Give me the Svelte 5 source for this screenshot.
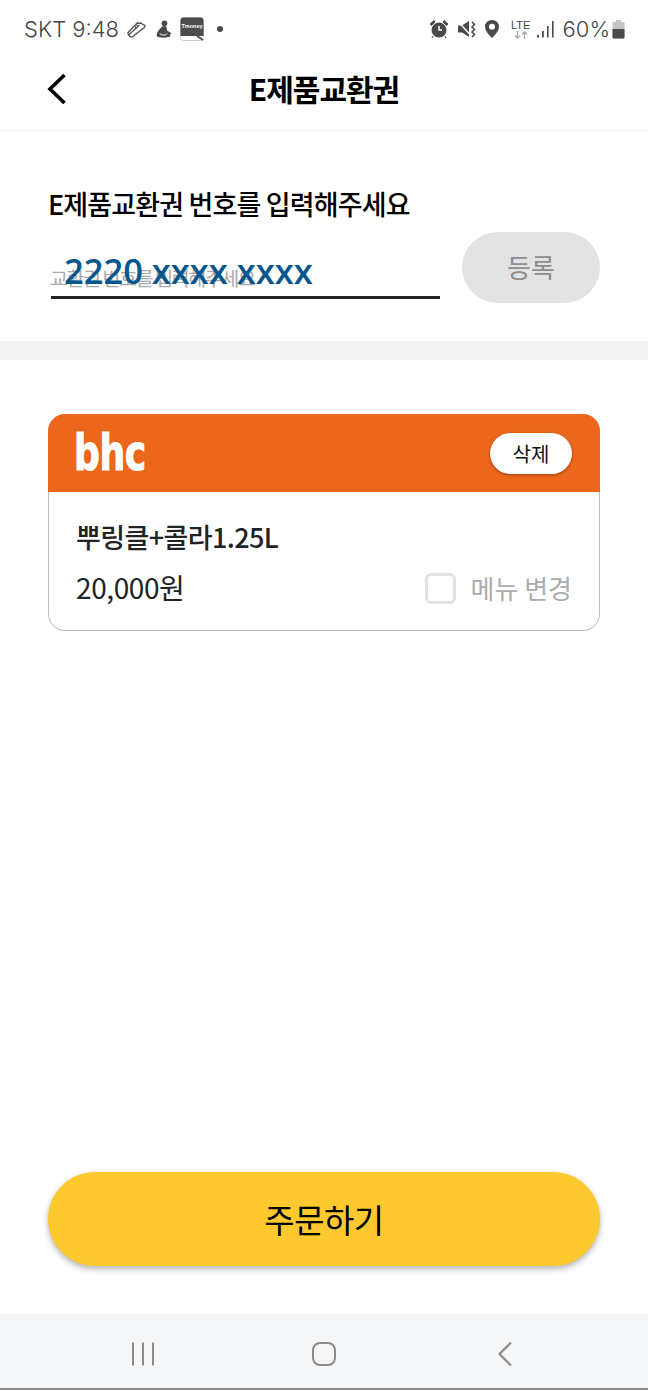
<script>
	const title = 'E제품교환권';
</script>

<div class="screen">
	<div class="status">
		<div class="status-left">
			<span class="status-text">SKT 9:48</span>
			<svg class="ic" width="21" height="20" viewBox="0 0 22 20" fill="none" stroke="#555" stroke-width="1.4">
				<path d="M2 14 L12 3.5 C13 4.5 14 4.5 15 3.5 L20 6.5 C20 9 17 10 15 11.5 L7 18 C5 19 2 17 2 14 Z" />
				<path d="M3 16 L14 6 M9 7 L11 9 M11 5.5 L13 7.5" />
			</svg>
			<svg class="ic fig" width="18" height="20" viewBox="0 0 19 20" fill="#4a4a4a">
				<circle cx="10" cy="4" r="3" />
				<path d="M8 7 L12 7 L13 12 C16 13 18 15 18 15 L16 15 L16 18 C13 19.5 5 19.5 2 18 C1 15 4 10 8 7 Z" />
				<path d="M5 15 C8 17 11 17 13 15" stroke="#fff" stroke-width="1" fill="none" />
			</svg>
			<svg class="ic tmoney" width="24" height="24" viewBox="0 0 24 24">
				<rect x="0.5" y="0.5" width="23" height="23" rx="3" fill="#fff" stroke="#ccc" />
				<path d="M3.5 0.5 H20.5 A3 3 0 0 1 23.5 3.5 V19 H0.5 V3.5 A3 3 0 0 1 3.5 0.5 Z" fill="#4d4d4d" />
				<path d="M17 19 L23 23" stroke="#4d4d4d" stroke-width="2" />
				<text x="12" y="10.5" text-anchor="middle" class="tm">Tmoney</text>
			</svg>
			<span class="dot"></span>
		</div>
		<div class="status-right">
			<svg class="ic" width="20" height="20" viewBox="0 0 20 20" fill="#4a4a4a">
				<circle cx="10" cy="11" r="7.5" />
				<path d="M10 7 V11 H13" stroke="#fff" stroke-width="1.6" fill="none" />
				<path d="M1 5 L5 1.5 L6 3 L2.5 6.5 Z M19 5 L15 1.5 L14 3 L17.5 6.5 Z M4 17 L3 19 M16 17 L17 19" stroke="#4a4a4a" />
			</svg>
			<svg class="ic mute" width="19" height="20" viewBox="0 0 19 20" fill="#4a4a4a">
				<path d="M1 6.5 H5 L12 2 V18 L5 13.5 H1 Z" />
				<path d="M1.5 3 L13 15.5" stroke="#fff" stroke-width="1.5" />
				<path d="M15 3 L17.5 5.5 L15 8 L17.5 10.5 L15 13 L17.5 15.5 L15 18" fill="none" stroke="#4a4a4a" stroke-width="1.6" />
			</svg>
			<svg class="ic pin" width="16" height="20" viewBox="0 0 16 20" fill="#4a4a4a">
				<path fill-rule="evenodd" d="M8 1 C3.8 1 1 4 1 7.7 C1 12 5.5 16.5 8 19 C10.5 16.5 15 12 15 7.7 C15 4 12.2 1 8 1 Z M8 4.7 A3 3 0 1 1 8 10.7 A3 3 0 1 1 8 4.7 Z" />
			</svg>
			<div class="lte">
				<span class="lte-label">LTE</span>
				<svg width="14" height="8" viewBox="0 0 14 8" fill="none" stroke="#aaa" stroke-width="1.3">
					<path d="M3.5 0 V7 M1 4.5 L3.5 7 L6 4.5" />
					<path d="M10.5 8 V1 M8 3.5 L10.5 1 L13 3.5" />
				</svg>
			</div>
			<svg class="ic signal" width="18" height="20" viewBox="0 0 18 20" fill="#4a4a4a">
				<rect x="0" y="16" width="2" height="2.5" />
				<rect x="5" y="12" width="1.8" height="6.5" />
				<rect x="10" y="7" width="1.6" height="11.5" />
				<rect x="15" y="2" width="1.6" height="16.5" />
			</svg>
			<span class="status-text pct">60%</span>
			<svg class="ic" width="13" height="20" viewBox="0 0 13 20">
				<path d="M4 1 H9 V3 H11.5 A1 1 0 0 1 12.5 4 V18 A1.5 1.5 0 0 1 11 19.5 H2 A1.5 1.5 0 0 1 0.5 18 V4 A1 1 0 0 1 1.5 3 H4 Z" fill="#c4c4c4" />
				<path d="M0.5 10 H12.5 V18 A1.5 1.5 0 0 1 11 19.5 H2 A1.5 1.5 0 0 1 0.5 18 Z" fill="#4a4a4a" />
			</svg>
		</div>
	</div>

	<header class="topbar">
		<svg class="back" width="22" height="32" viewBox="0 0 22 32" fill="none" stroke="#000" stroke-width="3.6">
			<path d="M18.5 2 L4 16 L18.5 30" />
		</svg>
		<h1>{title}</h1>
	</header>

	<section class="register">
		<div class="label">E제품교환권 번호를 입력해주세요</div>
		<div class="input-row">
			<div class="field">
				<span class="placeholder">교환권 번호를 입력해주세요</span>
				<span class="overlay">2220 xxxx xxxx</span>
			</div>
			<button class="register-btn">등록</button>
		</div>
	</section>

	<div class="band"></div>

	<main class="content">
		<article class="card">
			<div class="card-head">
				<span class="logo">bhc</span>
				<button class="delete">삭제</button>
			</div>
			<div class="card-body">
				<div class="menu-name">뿌링클+콜라1.25L</div>
				<div class="price-row">
					<span class="price">20,000원</span>
					<label class="change">
						<span class="checkbox"></span>
						<span>메뉴 변경</span>
					</label>
				</div>
			</div>
		</article>
	</main>

	<div class="order-wrap">
		<button class="order">주문하기</button>
	</div>

	<nav class="softkeys">
		<svg width="26" height="26" viewBox="0 0 26 26" stroke="#8a8a8a" stroke-width="2" fill="none">
			<path d="M3 1.5 V24.5 M13 1.5 V24.5 M23 1.5 V24.5" />
		</svg>
		<svg width="26" height="26" viewBox="0 0 26 26" stroke="#8a8a8a" stroke-width="2" fill="none">
			<rect x="2" y="2" width="22" height="22" rx="7" />
		</svg>
		<svg width="16" height="26" viewBox="0 0 16 26" stroke="#8a8a8a" stroke-width="2.2" fill="none">
			<path d="M14 1.5 L2.5 13 L14 24.5" />
		</svg>
	</nav>
</div>

<style>
	:global(body) {
		margin: 0;
		background: #fff;
	}

	.screen {
		width: 648px;
		height: 1390px;
		display: flex;
		flex-direction: column;
		font-family: 'Noto Sans CJK KR', 'Noto Sans', sans-serif;
		overflow: hidden;
	}

	.status {
		height: 58px;
		flex: none;
		display: flex;
		justify-content: space-between;
		align-items: center;
		padding: 0 23px 0 24px;
		box-sizing: border-box;
	}

	.status-left,
	.status-right {
		display: flex;
		align-items: center;
	}

	.status-right {
		gap: 7px;
	}

	.status-text {
		font-family: Inter, 'Noto Sans', sans-serif;
		font-size: 22px;
		font-weight: 300;
		color: #444;
		white-space: nowrap;
	}

	.ic {
		flex: none;
	}

	.status-left .ic {
		margin-left: 7px;
	}

	.status-left .fig {
		margin-left: 8px;
	}

	.tm {
		font-family: 'Liberation Sans', sans-serif;
		font-size: 5.5px;
		font-weight: 700;
		fill: #fff;
	}

	.dot {
		width: 6px;
		height: 6px;
		border-radius: 50%;
		background: #4a4a4a;
		margin-left: 13px;
	}

	.mute,
	.pin {
		margin-left: 1px;
	}

	.lte {
		display: flex;
		flex-direction: column;
		align-items: center;
		width: 20px;
		margin-left: 4px;
	}

	.lte-label {
		font-family: 'Liberation Sans', sans-serif;
		font-size: 11px;
		line-height: 11px;
		color: #444;
	}

	.signal {
		margin-left: -1px;
		margin-right: 1px;
	}

	.pct {
		margin-right: -5px;
	}

	.topbar {
		height: 72px;
		flex: none;
		position: relative;
		display: flex;
		align-items: center;
		justify-content: center;
		border-bottom: 1px solid #eeeeee;
	}

	.back {
		position: absolute;
		left: 46px;
		top: 15px;
	}

	h1 {
		margin: 0 0 13px;
		font-size: 30px;
		font-weight: 700;
		letter-spacing: -1px;
		color: #000;
		line-height: 40px;
	}

	.register {
		height: 210px;
		flex: none;
		box-sizing: border-box;
		padding: 56px 48px 0;
	}

	.label {
		font-size: 27px;
		font-weight: 500;
		letter-spacing: -0.85px;
		line-height: 34px;
		color: #000;
	}

	.input-row {
		display: flex;
		justify-content: space-between;
		margin-top: 11px;
	}

	.field {
		position: relative;
		width: 389px;
		height: 64px;
		margin-left: 3px;
		border-bottom: 3px solid #222;
		box-sizing: content-box;
	}

	.placeholder {
		position: absolute;
		left: -1px;
		top: 31px;
		font-size: 19.5px;
		line-height: 30px;
		letter-spacing: -1.4px;
		color: #aaaaaa;
		white-space: nowrap;
	}

	.overlay {
		position: absolute;
		left: 13px;
		top: 17px;
		font-family: 'Open Sans', sans-serif;
		font-size: 34.5px;
		font-weight: 600;
		line-height: 44px;
		color: #04568c;
		white-space: nowrap;
	}

	.register-btn {
		width: 138px;
		height: 71px;
		border: none;
		border-radius: 36px;
		background: #e3e3e3;
		color: #8d8d8d;
		font-family: inherit;
		font-size: 26px;
		line-height: 36px;
		padding: 0 0 2px;
	}

	.band {
		height: 19px;
		flex: none;
		background: #f2f2f2;
	}

	.content {
		flex: 1;
		padding: 54px 48px 0;
	}

	.card {
		height: 217px;
		display: flex;
		flex-direction: column;
	}

	.card-head {
		height: 78px;
		flex: none;
		background: #ec661c;
		border-radius: 17px 17px 0 0;
		display: flex;
		align-items: center;
		justify-content: space-between;
		padding: 0 28px;
	}

	.logo {
		font-family: 'DejaVu Sans Condensed', 'DejaVu Sans', sans-serif;
		font-weight: 700;
		font-size: 49px;
		line-height: 50px;
		letter-spacing: -0.5px;
		color: #fff;
		margin: 1px 0 0 -2px;
		-webkit-text-stroke: 1px #fff;
		transform: scaleX(0.82);
		transform-origin: left center;
	}

	.delete {
		width: 82px;
		height: 41px;
		border: none;
		border-radius: 21px;
		background: #fff;
		color: #111;
		font-family: inherit;
		font-size: 20px;
		padding: 0;
		box-shadow: 0 1px 3px rgba(0, 0, 0, 0.35);
	}

	.card-body {
		flex: 1;
		box-sizing: border-box;
		border: 1.5px solid #bdbdbd;
		border-top: none;
		border-radius: 0 0 17px 17px;
		padding: 27px 27px 0;
	}

	.menu-name {
		font-size: 27px;
		font-weight: 500;
		letter-spacing: -0.6px;
		line-height: 36px;
		color: #222;
	}

	.price-row {
		display: flex;
		justify-content: space-between;
		align-items: center;
		margin-top: 14px;
	}

	.price {
		font-size: 28px;
		line-height: 38px;
		letter-spacing: -0.4px;
		color: #222;
		margin-top: -3px;
	}

	.change {
		display: flex;
		align-items: center;
		gap: 14px;
		font-size: 26px;
		line-height: 38px;
		color: #acacac;
	}

	.checkbox {
		width: 25px;
		height: 25px;
		border: 3px solid #e2e2e2;
		border-radius: 6px;
		background: #fff;
	}

	.order-wrap {
		flex: none;
		padding: 0 48px;
		height: 142px;
	}

	.order {
		width: 100%;
		height: 94px;
		border: none;
		border-radius: 47px;
		background: #fdc92e;
		color: #000;
		font-family: inherit;
		font-size: 33px;
		letter-spacing: -0.5px;
		padding: 0;
		box-shadow: 0 3px 6px rgba(0, 0, 0, 0.3);
	}

	.softkeys {
		height: 76px;
		flex: none;
		box-sizing: border-box;
		background: #f5f6f8;
		border-bottom: 2px solid #8a8a8a;
		display: grid;
		grid-template-columns: repeat(3, 1fr);
		align-items: center;
		justify-items: center;
		padding: 5px 52px 0;
	}
</style>
